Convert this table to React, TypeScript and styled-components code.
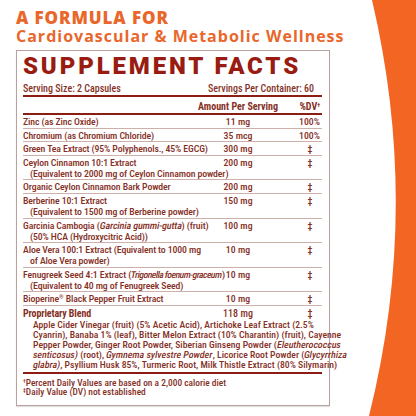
import React from 'react';
import styled, { createGlobalStyle } from 'styled-components';

const Global = createGlobalStyle`
  html, body { margin: 0; padding: 0; background: #fff; }
  body { width: 416px; height: 416px; overflow: hidden; }
`;

const colors = {
  orange: '#e9672b',
  swoosh: '#f26522',
  title: '#981c12',
  text: '#85301f',
  rule: '#8c1d13',
  hair: '#cdb0aa',
  frame: '#b9a29d',
};

const Page = styled.div`
  position: relative;
  width: 416px;
  height: 416px;
  padding: 8px 0 0 16px;
  box-sizing: border-box;
  font-family: 'Roboto Condensed', Roboto, sans-serif;
  color: ${colors.text};
`;

const Swoosh = styled.svg`
  position: absolute;
  top: 0;
  left: 0;
  width: 416px;
  height: 416px;
  pointer-events: none;
`;

const Heading = styled.header`
  position: relative;
  font-family: 'Open Sans', sans-serif;
  color: ${colors.orange};
  margin-bottom: 4px;
`;

const Kicker = styled.div`
  font-size: 17px;
  font-weight: 800;
  line-height: 19px;
  letter-spacing: 0.9px;
`;

const Tagline = styled.div`
  font-size: 16px;
  font-weight: 700;
  line-height: 19px;
  letter-spacing: 1px;
  white-space: nowrap;
`;

const Panel = styled.section`
  position: relative;
  width: 314px;
  box-sizing: border-box;
  border: 1px solid ${colors.frame};
  box-shadow: 0 1px 1px rgba(0, 0, 0, 0.12);
  background: #fff;
  padding: 3px 7px 8px 6px;
`;

const Title = styled.h1`
  margin: 0;
  font-family: Roboto, sans-serif;
  font-weight: 900;
  font-size: 24px;
  line-height: 24px;
  letter-spacing: 2.85px;
  color: ${colors.title};
  white-space: nowrap;
`;

const Serving = styled.div`
  display: flex;
  justify-content: space-between;
  margin-top: 5px;
  padding: 0 8px 0 0;
  font-size: 10px;
  line-height: 12px;
  font-weight: 500;
  border-bottom: 2px solid ${colors.rule};
`;

const Grid = styled.div`
  display: grid;
  grid-template-columns: minmax(0, 1fr) 80px 44px;
  font-size: 9.8px;
  font-weight: 500;
  line-height: 11px;
`;

const HeadRow = styled(Grid)`
  padding: 4px 0 1px;
  font-size: 10px;
  font-weight: 700;
  border-bottom: 2px solid ${colors.rule};
`;

const Item = styled(Grid)`
  padding: 1px 0 0.6px;
  border-bottom: 1px solid ${colors.hair};
`;

const BlendRow = styled(Grid)`
  padding: 2px 0 0;
  font-size: 10px;
  strong {
    font-weight: 700;
  }
`;

const Name = styled.div`
  white-space: nowrap;
  min-width: 0;
  letter-spacing: -0.12px;
`;

const Sub = styled.div`
  padding-left: 7px;
`;

const Amount = styled.div`
  text-align: center;
  white-space: nowrap;
`;

const Dv = styled.div`
  text-align: right;
  padding-right: 2px;
  white-space: nowrap;
`;

const Dagger = styled.span`
  display: inline-block;
  width: 20px;
  text-align: center;
`;

const Sup = styled.sup`
  font-size: 0.6em;
  line-height: 0;
  vertical-align: 0.5em;
`;

const Em = styled.em<{ $tight?: boolean }>`
  display: inline-block;
  font-style: normal;
  transform: skewX(-11deg);
  font-size: ${({ $tight }) => ($tight ? '0.96em' : 'inherit')};
  letter-spacing: ${({ $tight }) => ($tight ? '-0.5px' : 'inherit')};
`;

const Blend = styled.p`
  margin: 0;
  padding: 1px 0 2px 10px;
  font-size: 9.7px;
  font-weight: 500;
  line-height: 10px;
  white-space: nowrap;
  border-bottom: 2px solid ${colors.rule};
`;

const Notes = styled.div`
  padding-top: 4px;
  font-size: 9.4px;
  font-weight: 500;
  line-height: 9.5px;
`;

type Row = {
  name: React.ReactNode;
  sub?: React.ReactNode;
  amount: string;
  dv: string;
};

const rows: Row[] = [
  { name: 'Zinc (as Zinc Oxide)', amount: '11 mg', dv: '100%' },
  { name: 'Chromium (as Chromium Chloride)', amount: '35 mcg', dv: '100%' },
  { name: 'Green Tea Extract (95% Polyphenols., 45% EGCG)', amount: '300 mg', dv: '‡' },
  {
    name: 'Ceylon Cinnamon 10:1 Extract',
    sub: '(Equivalent to 2000 mg of Ceylon Cinnamon powder)',
    amount: '200 mg',
    dv: '‡',
  },
  { name: 'Organic Ceylon Cinnamon Bark Powder', amount: '200 mg', dv: '‡' },
  {
    name: 'Berberine 10:1 Extract',
    sub: '(Equivalent to 1500 mg of Berberine powder)',
    amount: '150 mg',
    dv: '‡',
  },
  {
    name: (
      <>
        Garcinia Cambogia (<Em>Garcinia gummi-gutta</Em>) (fruit)
      </>
    ),
    sub: '(50% HCA (Hydroxycitric Acid))',
    amount: '100 mg',
    dv: '‡',
  },
  {
    name: 'Aloe Vera 100:1 Extract (Equivalent to 1000 mg',
    sub: 'of Aloe Vera powder)',
    amount: '10 mg',
    dv: '‡',
  },
  {
    name: (
      <>
        Fenugreek Seed 4:1 Extract (<Em $tight>Trigonella foenum-graceum</Em>)
      </>
    ),
    sub: '(Equivalent to 40 mg of Fenugreek Seed)',
    amount: '10 mg',
    dv: '‡',
  },
  {
    name: (
      <>
        Bioperine<Sup>®</Sup> Black Pepper Fruit Extract
      </>
    ),
    amount: '10 mg',
    dv: '‡',
  },
];

export default function App() {
  return (
    <>
      <Global />
      <Page>
        <Swoosh viewBox="0 0 416 416" preserveAspectRatio="none">
          <path d="M372 0 Q421 208 369 416 L416 416 L416 0 Z" fill={colors.swoosh} />
        </Swoosh>
        <Heading>
          <Kicker>A FORMULA FOR</Kicker>
          <Tagline>Cardiovascular &amp; Metabolic Wellness</Tagline>
        </Heading>
        <Panel>
          <Title>SUPPLEMENT FACTS</Title>
          <Serving>
            <span>Serving Size: 2 Capsules</span>
            <span>Servings Per Container: 60</span>
          </Serving>
          <HeadRow>
            <span />
            <Amount>Amount Per Serving</Amount>
            <Dv>
              %DV<Sup>†</Sup>
            </Dv>
          </HeadRow>
          {rows.map((r, i) => (
            <Item key={i}>
              <Name>
                <div>{r.name}</div>
                {r.sub && <Sub>{r.sub}</Sub>}
              </Name>
              <Amount>{r.amount}</Amount>
              <Dv>{r.dv === '‡' ? <Dagger>‡</Dagger> : r.dv}</Dv>
            </Item>
          ))}
          <BlendRow>
            <Name>
              <strong>Proprietary Blend</strong>
            </Name>
            <Amount>118 mg</Amount>
            <Dv>
              <Dagger>‡</Dagger>
            </Dv>
          </BlendRow>
          <Blend>
            Apple Cider Vinegar (fruit) (5% Acetic Acid), Artichoke Leaf Extract (2.5%
            <br />
            Cyanrin), Banaba 1% (leaf), Bitter Melon Extract (10% Charantin) (fruit), Cayenne
            <br />
            Pepper Powder, Ginger Root Powder, Siberian Ginseng Powder (<Em>Eleutherococcus</Em>
            <br />
            <Em>senticosus)</Em> (root), <Em>Gymnema sylvestre Powder</Em>, Licorice Root Powder (
            <Em>Glycyrrhiza</Em>
            <br />
            <Em>glabra)</Em>, Psyllium Husk 85%, Turmeric Root, Milk Thistle Extract (80% Silymarin)
          </Blend>
          <Notes>
            <div>
              <Sup>†</Sup>Percent Daily Values are based on a 2,000 calorie diet
            </div>
            <div>
              <Sup>‡</Sup>Daily Value (DV) not established
            </div>
          </Notes>
        </Panel>
      </Page>
    </>
  );
}
